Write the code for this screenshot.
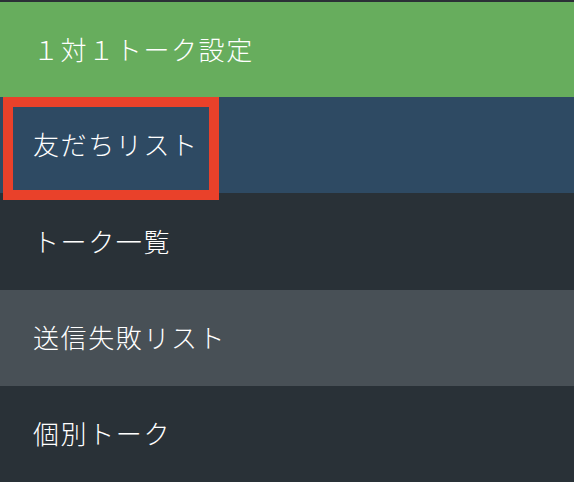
import React from "react";

const font = { fontFamily: '"Noto Sans CJK JP", "Noto Sans", sans-serif' };

const row = "flex items-center pl-[33px] pb-[3px] text-[26px] tracking-[1.6px] font-light";

export default function App() {
  return (
    <div className="w-[574px] h-[482px] overflow-hidden bg-[#293137] text-white" style={font}>
      <div className="h-[2px] bg-[#2b3036]" />
      <div className={"h-[95px] bg-[#67ad5d] " + row}>１対１トーク設定</div>
      <div className={"relative h-[96px] bg-[#2e4a63] " + row}>
        友だちリスト
        <div className="absolute left-[3px] top-0 w-[216px] h-[103px] border-[10px] border-[#e9412a]" />
      </div>
      <div className={"h-[97px] bg-[#293137] " + row}>トーク一覧</div>
      <div className={"h-[96px] bg-[#485056] " + row}>送信失敗リスト</div>
      <div className={"h-[96px] bg-[#293137] " + row}>個別トーク</div>
    </div>
  );
}
